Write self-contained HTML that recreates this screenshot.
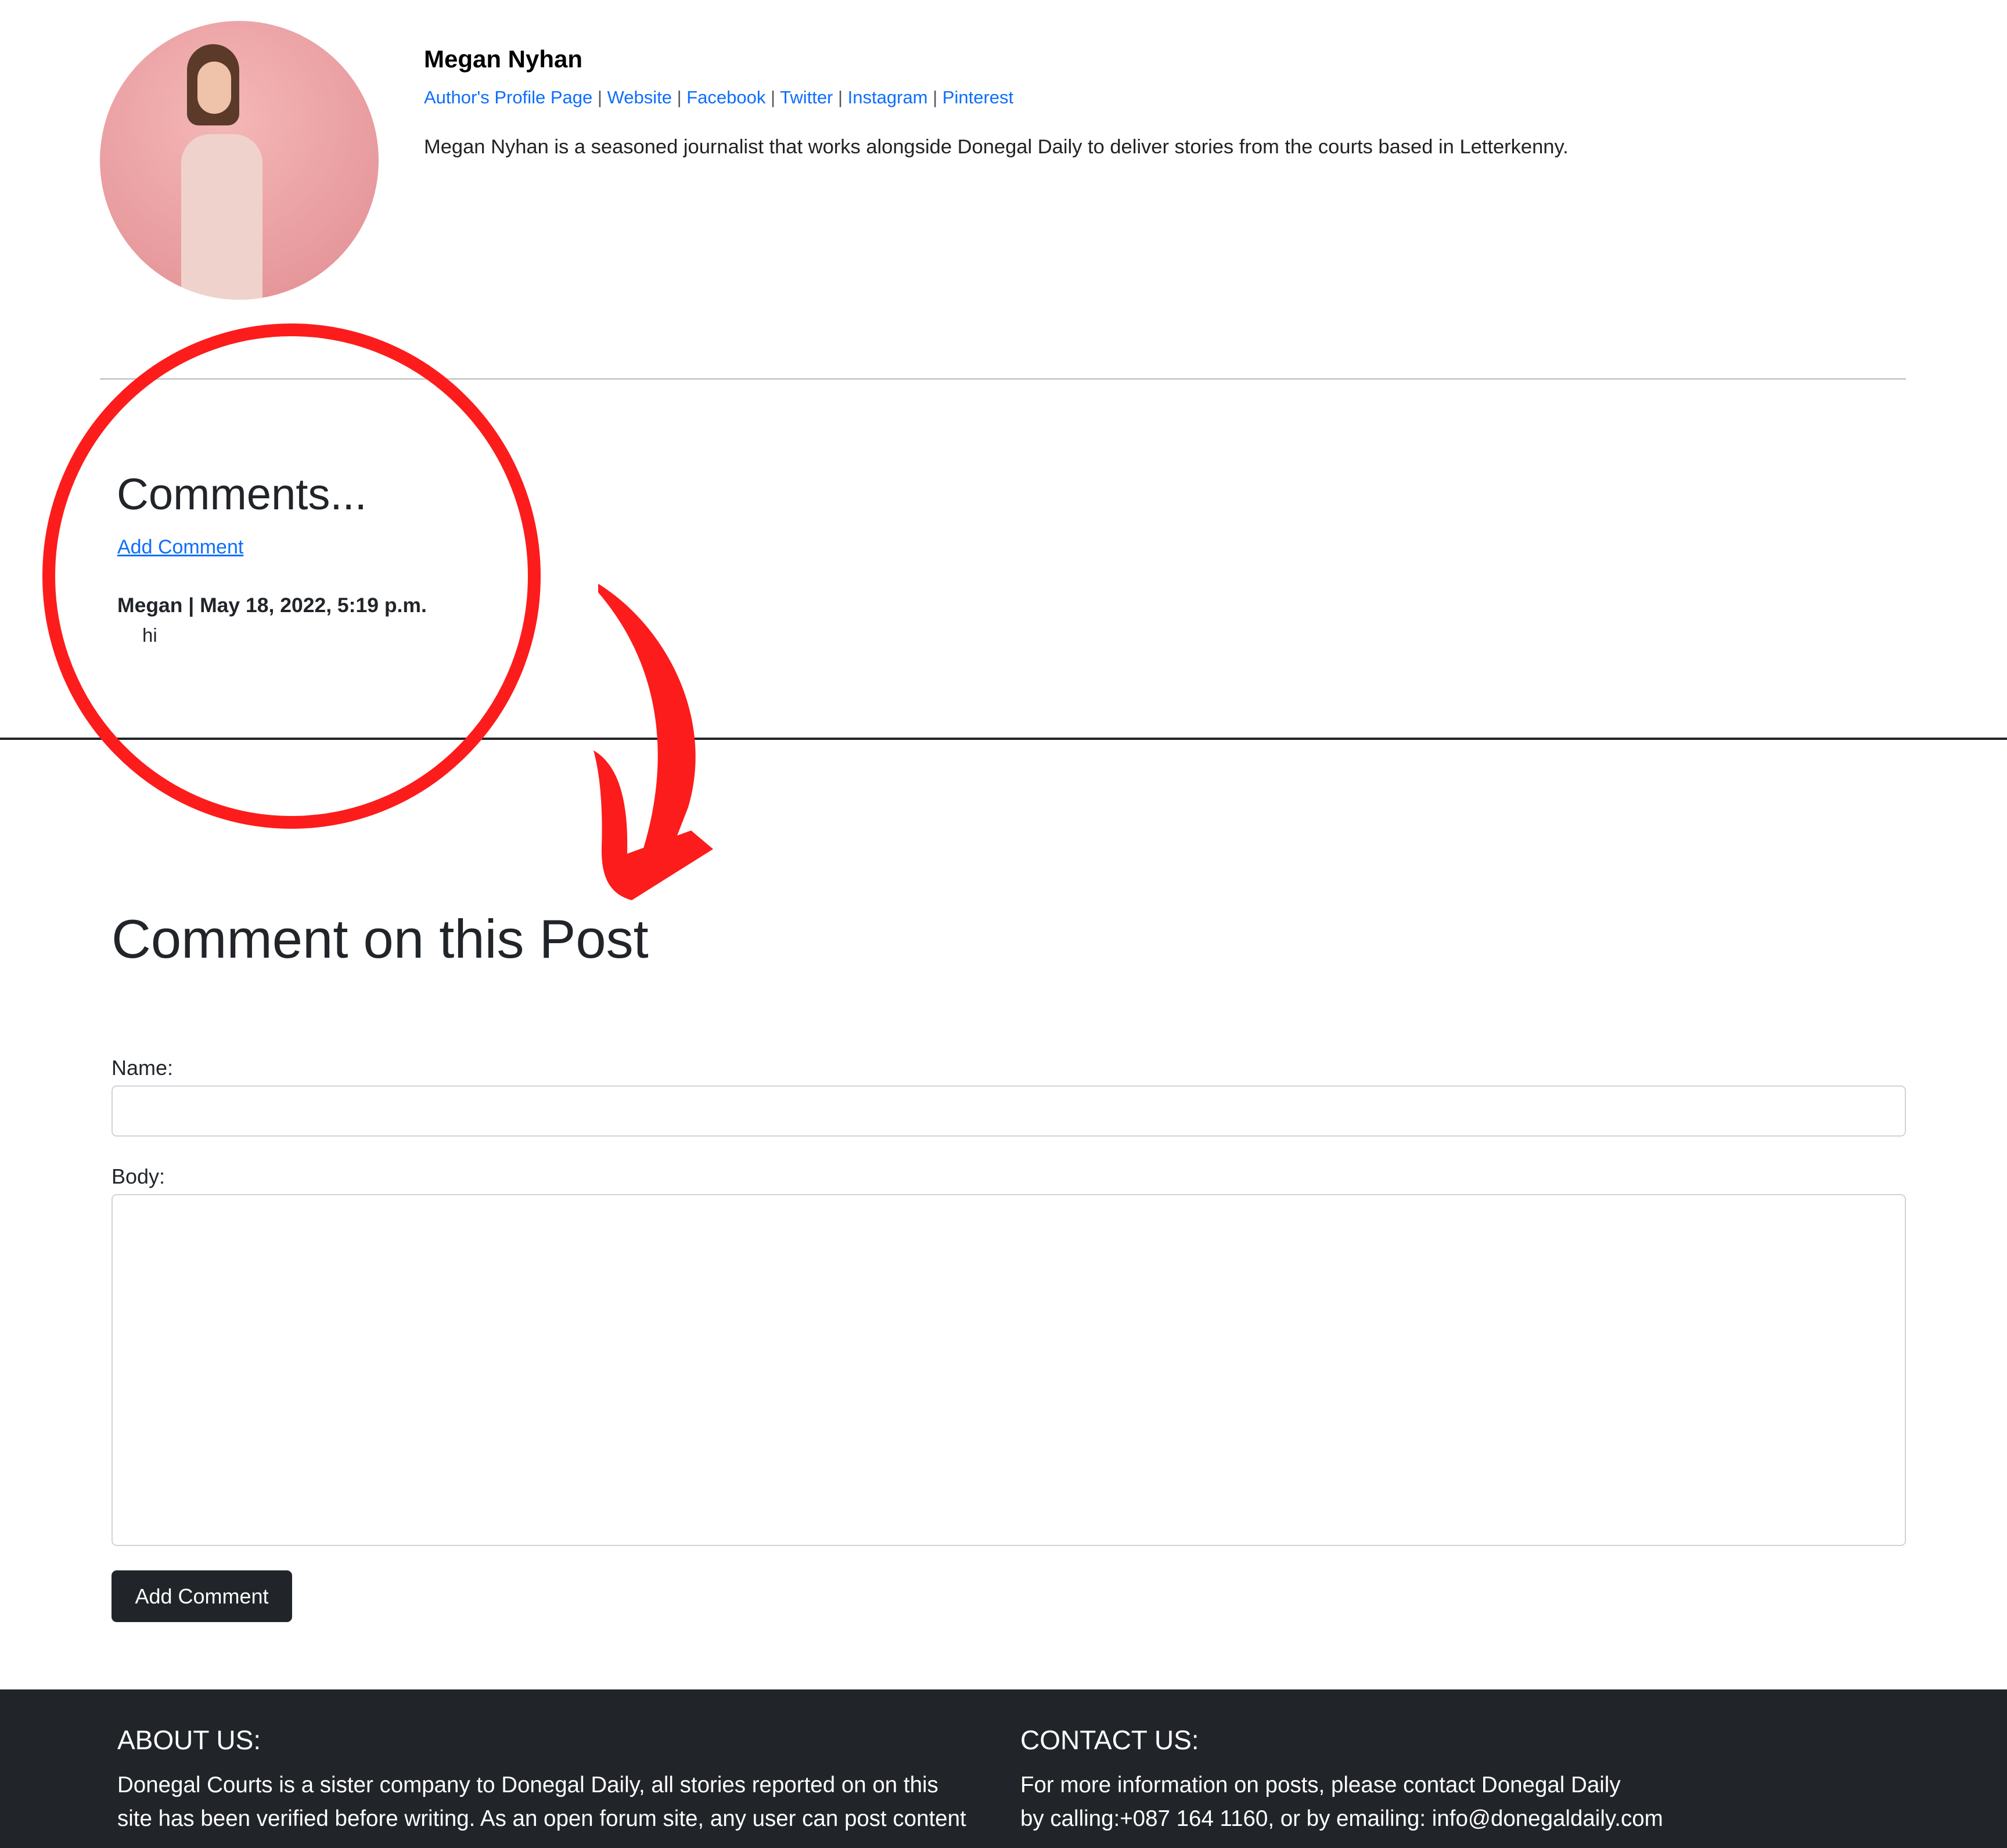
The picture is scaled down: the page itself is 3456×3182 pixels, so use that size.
<!DOCTYPE html>
<html><head><meta charset="utf-8"><style>
*{margin:0;padding:0;box-sizing:border-box}
body{width:3456px;height:3182px;background:#fff;font-family:"Liberation Sans",sans-serif;position:relative;overflow:hidden;color:#212529}
.a{position:absolute;white-space:nowrap}
a{color:#0d6efd;text-decoration:none}
</style></head><body>
<div class="a" style="left:172px;top:36px;width:480px;height:480px;border-radius:50%;background:radial-gradient(circle at 45% 35%,#f5b7b7,#e79a9d 70%,#e0888f);overflow:hidden">
  <div style="position:absolute;left:150px;top:40px;width:90px;height:140px;border-radius:45px 45px 20px 20px;background:#5b3a2a"></div>
  <div style="position:absolute;left:168px;top:70px;width:58px;height:90px;border-radius:29px;background:#efc2aa"></div>
  <div style="position:absolute;left:140px;top:195px;width:140px;height:300px;border-radius:50px 50px 0 0;background:#f0d2cc"></div>
</div>
<div class="a" style="left:730px;top:78px;font-size:42px;font-weight:bold;color:#000">Megan Nyhan</div>
<div class="a" style="left:730px;top:150px;font-size:31px;color:#555"><a>Author's Profile Page</a> | <a>Website</a> | <a>Facebook</a> | <a>Twitter</a> | <a>Instagram</a> | <a>Pinterest</a></div>
<div class="a" style="left:730px;top:234px;font-size:34.5px;color:#222">Megan Nyhan is a seasoned journalist that works alongside Donegal Daily to deliver stories from the courts based in Letterkenny.</div>
<div class="a" style="left:172px;top:651px;width:3110px;height:3px;background:#ccc"></div>
<div class="a" style="left:201px;top:808px;font-size:76px;font-weight:500">Comments...</div>
<div class="a" style="left:202px;top:923px;font-size:34px"><a style="text-decoration:underline">Add Comment</a></div>
<div class="a" style="left:202px;top:1022px;font-size:35.5px;font-weight:bold">Megan | May 18, 2022, 5:19 p.m.</div>
<div class="a" style="left:245px;top:1075px;font-size:33px">hi</div>
<div class="a" style="left:0;top:1270px;width:3456px;height:4px;background:#212529"></div>
<div class="a" style="left:192px;top:1563px;font-size:94px;font-weight:500">Comment on this Post</div>
<div class="a" style="left:192px;top:1818px;font-size:36px">Name:</div>
<div class="a" style="left:192px;top:1869px;width:3090px;height:88px;border:2px solid #ced4da;border-radius:9px"></div>
<div class="a" style="left:192px;top:2005px;font-size:36px">Body:</div>
<div class="a" style="left:192px;top:2056px;width:3090px;height:606px;border:2px solid #ced4da;border-radius:9px"></div>
<div class="a" style="left:192px;top:2704px;width:311px;height:89px;background:#212529;border-radius:9px;color:#fff;font-size:36px;line-height:89px;text-align:center">Add Comment</div>
<div class="a" style="left:0;top:2909px;width:3456px;height:273px;background:#212529;color:#fff">
  <div class="a" style="left:202px;top:60px;font-size:46px;font-weight:500">ABOUT US:</div>
  <div class="a" style="left:202px;top:136px;font-size:38.5px;line-height:58px">Donegal Courts is a sister company to Donegal Daily, all stories reported on on this<br>site has been verified before writing. As an open forum site, any user can post content</div>
  <div class="a" style="left:1757px;top:60px;font-size:46px;font-weight:500">CONTACT US:</div>
  <div class="a" style="left:1757px;top:136px;font-size:38.5px;line-height:58px">For more information on posts, please contact Donegal Daily<br>by calling:+087 164 1160, or by emailing: info@donegaldaily.com</div>
</div>
<svg class="a" style="left:0;top:0" width="3456" height="3182">
  <ellipse cx="502" cy="992" rx="418" ry="424" fill="none" stroke="#fc1c1c" stroke-width="22"/>
  <path d="M1030,1005 C1150,1080 1230,1240 1185,1390 L1150,1480 L1105,1470 C1150,1330 1150,1160 1030,1020 Z" fill="#fc1c1c"/>
  <path d="M1022,1292 C1070,1320 1082,1390 1080,1470 L1190,1430 L1228,1462 L1088,1550 C1050,1540 1035,1510 1036,1460 C1038,1400 1035,1340 1022,1292 Z" fill="#fc1c1c"/>
</svg>
</body></html>
